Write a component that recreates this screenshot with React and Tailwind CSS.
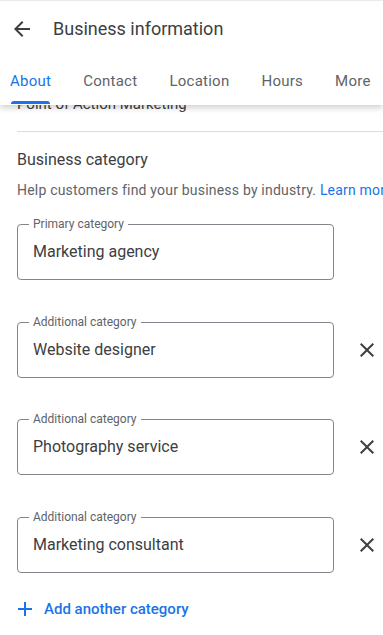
import React from "react";

const font = { fontFamily: "Roboto, 'Noto Sans', Arial, sans-serif" };

const tabs = ["About", "Contact", "Location", "Hours", "More"];

const additional = ["Website designer", "Photography service", "Marketing consultant"];

const ArrowBack = () => (
  <svg width="24" height="24" viewBox="0 0 24 24" fill="#3c4043">
    <path d="M20 11H7.83l5.59-5.59L12 4l-8 8 8 8 1.41-1.41L7.83 13H20v-2z" />
  </svg>
);

const CloseIcon = () => (
  <svg width="24" height="24" viewBox="0 0 24 24" fill="#3c4043">
    <path d="M19 6.41 17.59 5 12 10.59 6.41 5 5 6.41 10.59 12 5 17.59 6.41 19 12 13.41 17.59 19 19 17.59 13.41 12z" />
  </svg>
);

const AddIcon = () => (
  <svg width="24" height="24" viewBox="0 0 24 24" fill="#1a73e8">
    <path d="M19 13h-6v6h-2v-6H5v-2h6V5h2v6h6v2z" />
  </svg>
);

const Field = ({ label, value }) => (
  <div className="relative flex h-[56px] w-[317px] shrink-0 items-center rounded-[4px] border border-[#80868b] pl-[15px]">
    <span className="absolute -top-[9px] left-[11px] bg-white px-[4px] text-[12px] leading-[16px] text-[#5f6368]">
      {label}
    </span>
    <span className="text-[16px] leading-[24px] text-[#3c4043]">{value}</span>
  </div>
);

export default function App() {
  return (
    <div className="h-[635px] w-[383px] overflow-hidden bg-white" style={font}>
      {/* HEADER */}
      <header className="relative z-10 border-t border-[#e8eaed] bg-white shadow-[0_3px_6px_rgba(0,0,0,0.18)]">
        <div className="flex h-[56px] items-center">
          <div className="ml-[10px] flex h-6 w-6 items-center justify-center">
            <ArrowBack />
          </div>
          <h1 className="ml-[19px] text-[18px] leading-[24px] text-[#3c4043]">Business information</h1>
        </div>
        <nav className="flex h-[48px] gap-8 whitespace-nowrap pl-[10px]">
          {tabs.map((t, i) => (
            <div key={t} className="relative flex flex-col">
              <span
                className={
                  "mt-[14px] text-[15px] leading-[20px] tracking-[0.25px] " +
                  (i === 0 ? "text-[#1a73e8]" : "text-[#5f6368]")
                }
              >
                {t}
              </span>
              {i === 0 && (
                <span className="mx-[1px] mt-auto mb-[1px] h-[3px] rounded-t-[3px] bg-[#1a73e8]" />
              )}
            </div>
          ))}
        </nav>
      </header>

      {/* SCROLLED CONTENT */}
      <main className="pl-[17px]">
        <div className="h-[26px] overflow-hidden">
          <p className="-mt-[11px] text-[15px] leading-[20px] text-[#3c4043]">Point of Action Marketing</p>
        </div>
        <div className="border-t border-[#dadce0]" />

        <h2 className="mt-[16px] text-[16px] leading-[24px] text-[#3c4043]">Business category</h2>
        <p className="mt-[8px] whitespace-nowrap text-[14px] leading-[20px] tracking-[0.2px] text-[#5f6368]">
          Help customers find your business by industry.{" "}
          <span className="text-[#1a73e8]">Learn more</span>
        </p>

        <div className="mt-[24px]">
          <Field label="Primary category" value="Marketing agency" />
        </div>

        {additional.map((v, i) => (
          <div
            key={v}
            className={"flex items-center gap-[21px] " + (i === 1 ? "mt-[41px]" : "mt-[42px]")}
          >
            <Field label="Additional category" value={v} />
            <CloseIcon />
          </div>
        ))}

        <div className="mt-[24px] flex items-center gap-[7px]">
          <div className="-ml-[4px]">
            <AddIcon />
          </div>
          <span className="text-[15px] font-medium leading-[24px] text-[#1a73e8]">Add another category</span>
        </div>
      </main>
    </div>
  );
}
